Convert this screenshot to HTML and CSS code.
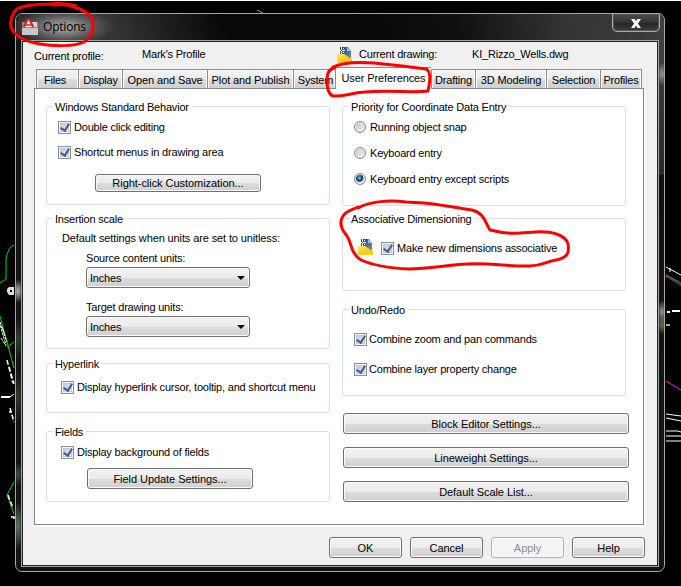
FILE: index.html
```
<!DOCTYPE html>
<html lang="en">
<head>
<meta charset="utf-8">
<title>Options</title>
<link rel="stylesheet" href="styles.css">
</head>
<body>
<svg class="defs" width="0" height="0" aria-hidden="true">
  <defs>
    <linearGradient id="sheet" x1="0" y1="0" x2="1" y2="1"><stop offset="0" stop-color="#1d3f63"/><stop offset="1" stop-color="#6f9cc0"/></linearGradient>
    <linearGradient id="gold" x1="0" y1="0" x2="1" y2="1"><stop offset="0" stop-color="#ffe95c"/><stop offset="1" stop-color="#e8b000"/></linearGradient>
    <symbol id="drawing" viewBox="0 0 16 16">
      <path d="M3 0H11L14 4V13H3Z" fill="url(#sheet)"/>
      <path d="M10 0L14 4H10Z" fill="#a9c3d6"/>
      <path d="M0 7H7L15 12V16H0Z" fill="url(#gold)"/>
      <path d="M0 16L6 10L15 13V16Z" fill="#f7cf1f"/>
      <path d="M4.500 0V7M1 3.500H8" stroke="#fff" stroke-width="1"/>
      <path d="M2 1L3 2M6 5L7 6M7 1L6 2M3 5L2 6" stroke="#fff" stroke-width="1"/>
      <path d="M4 3H5V4H4Z" fill="#24476b"/>
    </symbol>
  </defs>
</svg>
<div class="desktop">
  <svg class="cad" width="681" height="586" fill="none" aria-hidden="true">
    <path d="M0 .5H681" stroke="#fff"/>
    <path d="M257 10L263 13" stroke="#999"/>
    <g stroke="#0d0">
      <path d="M14 245Q8 247 6 259V279L0 283M0 316L7 342L14 368M7 347L14 342M14 482L7 495L14 514M666 275L681 283"/>
    </g>
    <path d="M7 289L9 287H14V295H9L7 292Z" fill="#ddd"/>
    <path d="M10 290H12V292H10Z" fill="#000"/>
    <g stroke="#fff">
      <path d="M0 322L7 342M0 325L6 345M2 327L5 336M1 338L6 346" stroke-dasharray="3 1"/>
      <path d="M7 360L13 383M9 367L14 384M10 408L14 422M9 412L12 412M8 495L13 508M11 517H14V521" stroke-width="1.5" stroke-dasharray="5 2"/>
      <path d="M1 397H10" stroke-width="2"/>
      <path d="M10 397L14 394M666 267L681 275M670 268V272"/>
      <path d="M667 312H670M672 311H680" stroke-width="2"/>
      <path d="M666 325H670" stroke-width="2" stroke="#aaa"/>
      <path d="M666 414L681 416M666 418L681 421M666 431H678L681 432M666 436H681M666 441H681"/>
    </g>
    <path d="M666 276L681 285M666 381L681 390" stroke="#f0f"/>
  </svg>

  <main class="window">
    <header class="titlebar">
      <svg class="app-icon" width="16" height="16" viewBox="0 0 16 16" aria-hidden="true">
        <path d="M0 3H16V16H0Z" fill="#c8c8c8"/>
        <path d="M0 3H16V9H0Z" fill="#8a8a8a"/>
        <path d="M10 3H15V8H12Z" fill="#d5d5d5"/>
        <path d="M2 8L5.500 .5H7.500L11 8" fill="#fff" stroke="#e51b23" stroke-width="2"/>
        <path d="M4 6H9" stroke="#e51b23" stroke-width="1.500"/>
      </svg>
      <h1 class="title">Options</h1>
      <button class="close" aria-label="Close">
        <svg width="10" height="9" viewBox="0 0 10 9"><path d="M0 0H3.5L5 2 6.5 0H10L7 4.400 10 9H6.5L5 6.800 3.500 9H0L3 4.400Z" fill="#f6f6f6"/></svg>
      </button>
    </header>

    <div class="client">
      <div class="info">
        <span class="profile-label">Current profile:</span>
        <span class="profile-name">Mark's Profile</span>
        <svg class="info-icon" width="16" height="16"><use href="#drawing"/></svg>
        <span class="drawing-label">Current drawing:</span>
        <span class="drawing-name">KI_Rizzo_Wells.dwg</span>
      </div>

      <nav class="tabs">
        <span class="tab files">Files</span>
        <span class="tab display">Display</span>
        <span class="tab open">Open and Save</span>
        <span class="tab plot">Plot and Publish</span>
        <span class="tab system">System</span>
        <span class="tab active">User Preferences</span>
        <span class="tab drafting">Drafting</span>
        <span class="tab modeling">3D Modeling</span>
        <span class="tab selection">Selection</span>
        <span class="tab profiles">Profiles</span>
      </nav>

      <div class="panel">
        <div class="column">
          <section class="group behavior">
            <h2 class="legend">Windows Standard Behavior</h2>
            <label class="row"><i class="check"></i><span>Double click editing</span></label>
            <label class="row"><i class="check"></i><span>Shortcut menus in drawing area</span></label>
            <button class="btn">Right-click Customization...</button>
          </section>
          <section class="group scale">
            <h2 class="legend">Insertion scale</h2>
            <p class="hint">Default settings when units are set to unitless:</p>
            <p class="field">Source content units:</p>
            <div class="select"><span>Inches</span></div>
            <p class="field second">Target drawing units:</p>
            <div class="select"><span>Inches</span></div>
          </section>
          <section class="group hyperlink">
            <h2 class="legend">Hyperlink</h2>
            <label class="row"><i class="check"></i><span>Display hyperlink cursor, tooltip, and shortcut menu</span></label>
          </section>
          <section class="group fields">
            <h2 class="legend">Fields</h2>
            <label class="row"><i class="check"></i><span>Display background of fields</span></label>
            <button class="btn">Field Update Settings...</button>
          </section>
        </div>

        <div class="column right">
          <section class="group priority">
            <h2 class="legend">Priority for Coordinate Data Entry</h2>
            <label class="row"><i class="radio"></i><span>Running object snap</span></label>
            <label class="row"><i class="radio"></i><span>Keyboard entry</span></label>
            <label class="row"><i class="radio on"></i><span>Keyboard entry except scripts</span></label>
          </section>
          <section class="group assoc">
            <h2 class="legend">Associative Dimensioning</h2>
            <label class="row"><svg width="16" height="16"><use href="#drawing"/></svg><i class="check"></i><span>Make new dimensions associative</span></label>
          </section>
          <section class="group undo">
            <h2 class="legend">Undo/Redo</h2>
            <label class="row"><i class="check"></i><span>Combine zoom and pan commands</span></label>
            <label class="row"><i class="check"></i><span>Combine layer property change</span></label>
          </section>
          <div class="stack">
            <button class="btn">Block Editor Settings...</button>
            <button class="btn">Lineweight Settings...</button>
            <button class="btn">Default Scale List...</button>
          </div>
        </div>
      </div>

      <footer class="actions">
        <button class="btn">OK</button>
        <button class="btn">Cancel</button>
        <button class="btn" disabled>Apply</button>
        <button class="btn">Help</button>
      </footer>
    </div>
  </main>

  <svg class="marks" width="681" height="586" fill="none" stroke="#f00" stroke-width="3" stroke-linecap="round" stroke-linejoin="round" aria-hidden="true">
    <path d="M76 6C67 3 58 3 48 4C34 5 18 5 14 12C10 20 10 27 13 31C18 38 28 42 40 44C52 46 74 47 84 42C91 38 94 30 93 22C92 14 84 10 74 7C67 4 60 4 53 5"/>
    <path d="M332 68C341 62 358 62 374 63L402 66L426 69C431 71 430 82 428 91C413 93 390 90 365 92C350 93 343 97 333 96C327 94 327 85 327 80C327 74 328 70 334 68"/>
    <path d="M358 208C370 201 390 200 406 202L424 203C438 204 456 208 472 210C484 213 485 222 490 230C510 235 520 233 535 232C552 231 566 235 568 244C570 254 566 258 556 260C544 262 545 265 530 266C510 267 495 263 468 264C446 265 430 269 409 269C388 268 372 265 361 260C350 253 352 243 347 236C341 229 339 222 343 216C346 211 352 210 358 207"/>
  </svg>
</div>
</body>
</html>
```
FILE: styles.css
```
* { box-sizing: border-box; }

body {
  margin: 0;
  background: #000;
  color: #000;
  font: 11px/14px "Liberation Sans", Arial, sans-serif;
  letter-spacing: -0.2px;
  white-space: nowrap;
}

h1, h2, p { margin: 0; font-size: inherit; font-weight: normal; }
button { font: inherit; letter-spacing: inherit; color: inherit; padding: 0; }
svg { display: block; flex: none; }
.defs { position: absolute; }

.desktop {
  position: relative;
  width: 681px;
  height: 586px;
  padding: 13px 0 0 15px;
  overflow: hidden;
}
.cad, .marks { position: absolute; left: 0; top: 0; pointer-events: none; }

.window {
  position: relative;
  width: 650px;
  height: 559px;
  padding: 0 5px 4px;
  border: 1px solid #a5a5a5;
  border-radius: 7px;
  background:
    radial-gradient(ellipse 5px 12px at 2px 277px, #bbb, transparent),
    radial-gradient(ellipse 5px 20px at 2px 325px, #344534, transparent),
    radial-gradient(ellipse 5px 26px at 2px 382px, #304030, transparent),
    radial-gradient(ellipse 5px 12px at 2px 460px, #405040, transparent),
    radial-gradient(ellipse 5px 24px at 2px 512px, #687b68, transparent),
    radial-gradient(ellipse 5px 12px at 646px 298px, #999, transparent),
    radial-gradient(ellipse 5px 9px at 646px 311px, #77774a, transparent),
    radial-gradient(ellipse 5px 12px at 646px 60px, #999, transparent),
    linear-gradient(#444, #292929 160px, #111 161px, #151515) right / 6px 100% no-repeat,
    #131313;
}

.titlebar {
  display: flex;
  height: 26px;
  margin: 0 -5px;
  padding-left: 6px;
  border-radius: 6px 6px 0 0;
  background:
    radial-gradient(ellipse 50px 19px at 48px 13px, #949494 20%, rgba(110,110,110,.65) 60%, transparent),
    linear-gradient(75deg, #292929 0, #353535 95px, #202020 145px, #080808 205px, #080808 330px, #101010 430px, #343434 535px, #3b3b3b 610px, #404040);
}
.app-icon { margin-top: 5px; }
.title {
  margin: 5px 0 0 5px;
  font: 12px/15px "Open Sans", "Noto Sans", sans-serif;
  letter-spacing: -0.2px;
}
.close {
  display: flex;
  justify-content: center;
  width: 48px;
  height: 19px;
  margin: -1px 4px 0 auto;
  padding-top: 5px;
  border: 1px solid #aaa;
  border-radius: 0 0 5px 5px;
  background: linear-gradient(#4b4b4b, #343434 50%, #242424 51%, #3d3d3d);
  box-shadow: inset 0 0 0 1px #555;
}

.client {
  width: 638px;
  height: 527px;
  padding: 0 0 0 12px;
  border: 1px solid #a2a2a2;
  background: #f0f0f0;
  box-shadow: inset 0 0 0 1px #222;
}

.info { display: flex; height: 27px; padding-top: 6px; }
.profile-label { width: 108px; padding-top: 2px; }
.profile-name { width: 195px; }
.drawing-label { width: 112px; margin-left: 6px; }
.drawing-name { margin-left: 1px; }

.tabs { display: flex; align-items: flex-end; height: 20px; padding-left: 2px; }
.tab {
  height: 19px;
  padding-top: 3px;
  border: 1px solid #8b8b97;
  border-width: 1px 0 0 1px;
  background: linear-gradient(#f3f3f3, #ebebeb 50%, #dddddd 51%, #cfcfcf);
  box-shadow: inset 1px 1px #fbfbfb, inset -1px 0 #fbfbfb;
  text-align: center;
}
.files { width: 42px; padding-right: 5px; }
.display { width: 44px; }
.open { width: 85px; }
.plot { width: 86px; }
.system { width: 42px; padding-left: 2px; }
.active {
  position: relative;
  width: 96px;
  height: 22px;
  margin-bottom: -1px;
  background: #fff;
  box-shadow: none;
}
.drafting { width: 44px; }
.modeling { width: 71px; }
.selection { width: 54px; }
.profiles { width: 42px; border-right-width: 1px; }
.open, .plot, .active, .modeling { letter-spacing: -0.1px; }

.panel {
  display: flex;
  gap: 12px;
  width: 610px;
  height: 437px;
  padding: 17px 0 0 11px;
  border: 1px solid #85858d;
  background: #fff;
  box-shadow: 2px 2px #fafafa;
}
.column { width: 284px; }
.right { width: 287px; }

.group {
  width: 284px;
  border: 1px solid #d5dfe5;
  border-radius: 3px;
}
.legend {
  width: max-content;
  height: 14px;
  margin: -7px 0 0 6px;
  padding: 0 3px 0 2px;
  background: #fff;
}
.row { display: flex; align-items: center; height: 14px; }
.check {
  display: flex;
  align-items: center;
  justify-content: center;
  width: 13px;
  height: 13px;
  margin-right: 3px;
  border: 1px solid #8e8f8f;
  background: linear-gradient(135deg, #b8c2cd, #f4f6f8);
  box-shadow: inset 0 0 0 1px #f4f4f4, inset 0 0 0 2px #c2c8ce;
}
.check::after {
  content: "";
  width: 4px;
  height: 7px;
  margin: -1px 0 0 0;
  border: solid #4157a0;
  border-width: 0 2px 2px 0;
  transform: rotate(32deg);
}
.radio {
  width: 12px;
  height: 12px;
  margin-right: 4px;
  border: 1px solid #858585;
  border-radius: 50%;
  background: linear-gradient(135deg, #bfc3c8, #f3f3f3);
  box-shadow: inset 0 0 0 1px #f1f1f1;
}
.radio.on { background: radial-gradient(circle at 45% 40%, #8ddcf5 0, #2683ae 1.5px, #0c3550 3.3px, #e8e8e8 4.3px); }

.btn {
  display: block;
  height: 21px;
  border: 1px solid #707070;
  border-radius: 3px;
  background: linear-gradient(#f3f3f3, #ebebeb 50%, #dddddd 51%, #cfcfcf);
  box-shadow: inset 0 0 0 1px #fafafa;
  letter-spacing: -0.05px;
  text-align: center;
}
.btn:disabled { color: #8c8c8c; border-color: #b0b2b5; background: #f4f4f4; }

.behavior { height: 99px; }
.behavior .row { margin: 6px 0 0 11px; }
.behavior .row + .row { margin-top: 11px; }
.behavior .btn { width: 166px; height: 18px; margin: 15px 0 0 48px; line-height: 15px; }

.scale { height: 131px; margin-top: 13px; }
.hint { margin: 5px 0 0 15px; letter-spacing: -0.12px; }
.field { margin: 6px 0 2px 39px; }
.field.second { margin-top: 12px; }
.select {
  display: flex;
  align-items: center;
  justify-content: space-between;
  width: 164px;
  height: 21px;
  margin-left: 39px;
  padding: 0 4px 0 3px;
  border: 1px solid #707070;
  border-radius: 3px;
  background: linear-gradient(#f3f3f3, #ebebeb 50%, #dddddd 51%, #cfcfcf);
  box-shadow: inset 0 0 0 1px #fafafa;
}
.select::after { content: ""; border: solid transparent; border-width: 4px 4px 0; border-top-color: #000; }

.hyperlink { height: 50px; margin-top: 14px; }
.hyperlink .row { margin: 9px 0 0 14px; }
.fields { height: 71px; margin-top: 18px; }
.fields .row { margin: 6px 0 0 14px; }
.fields .btn { width: 166px; margin: 9px 0 0 40px; }

.priority { height: 100px; }
.priority .row { margin: 6px 0 0 11px; }
.priority .row + .row { margin-top: 12px; }
.assoc { height: 73px; margin-top: 12px; }
.assoc .row { margin: 15px 0 0 15px; }
.assoc .row svg { margin: -3px 7px 0 0; }
.undo { height: 87px; margin-top: 18px; }
.undo .row { margin: 15px 0 0 11px; }
.undo .row + .row { margin-top: 16px; }
.undo .check { margin-right: 2px; }
.stack { display: grid; gap: 13px; margin: 17px 0 0 1px; }

.actions { display: flex; gap: 8px; padding: 12px 0 0 295px; }
.actions .btn { width: 73px; }
```
